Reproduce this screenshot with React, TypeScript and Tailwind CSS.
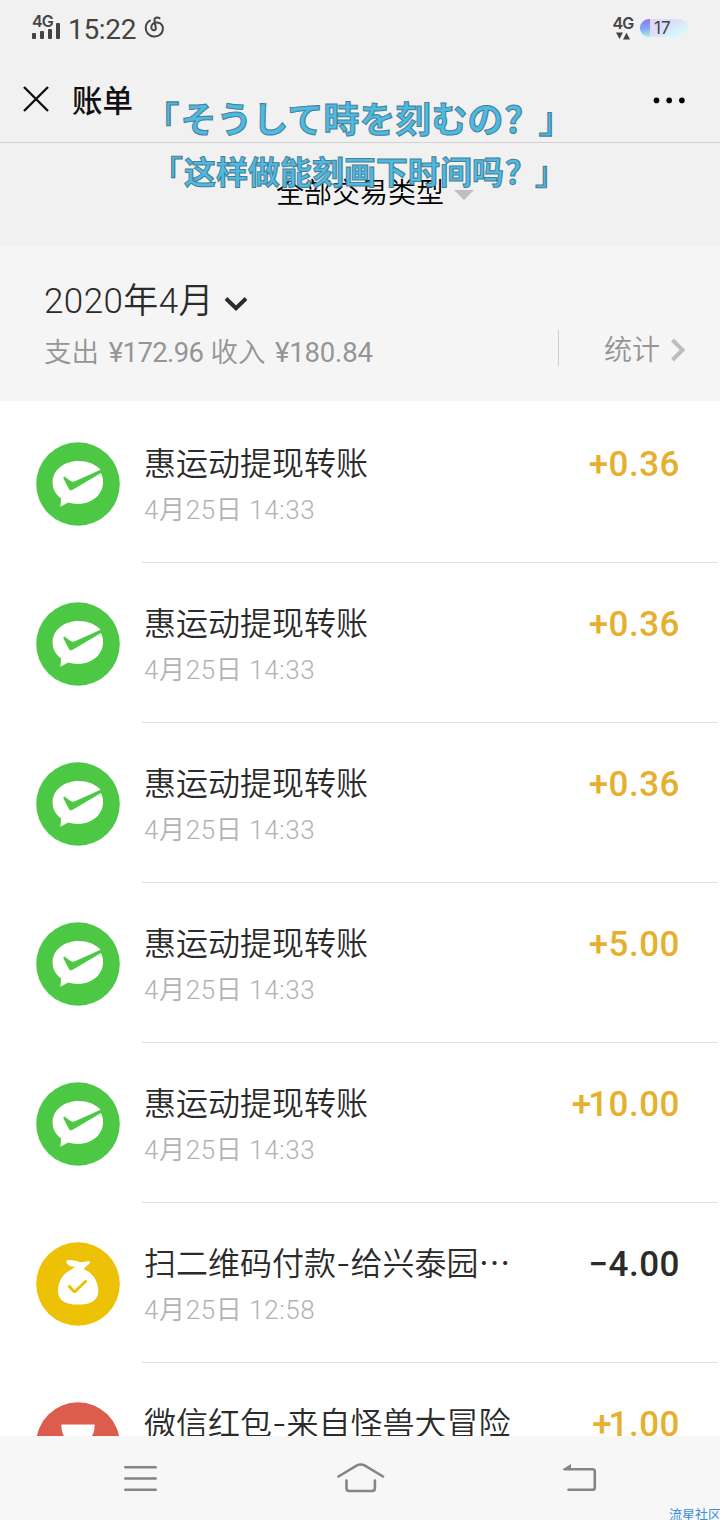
import React from "react";

type Kind = "green" | "yellow" | "red";
interface Item {
  kind: Kind;
  title: string;
  more?: boolean;
  date: [string, string, string];
  amount: string;
}

const items: Item[] = [
  { kind: "green", title: "惠运动提现转账", date: ["4", "25", "14:33"], amount: "+0.36" },
  { kind: "green", title: "惠运动提现转账", date: ["4", "25", "14:33"], amount: "+0.36" },
  { kind: "green", title: "惠运动提现转账", date: ["4", "25", "14:33"], amount: "+0.36" },
  { kind: "green", title: "惠运动提现转账", date: ["4", "25", "14:33"], amount: "+5.00" },
  { kind: "green", title: "惠运动提现转账", date: ["4", "25", "14:33"], amount: "+10.00" },
  { kind: "yellow", title: "扫二维码付款-给兴泰园", more: true, date: ["4", "25", "12:58"], amount: "−4.00" },
  { kind: "red", title: "微信红包-来自怪兽大冒险", date: ["", "", ""], amount: "+1.00" },
];

function Badge({ kind }: { kind: Kind }) {
  return (
    <svg width="84" height="84" viewBox="0 0 84 84" className="shrink-0">
      {kind === "green" && (
        <>
          <circle cx="42" cy="42" r="41.8" fill="#4dc844" />
          <path
            d="M64.5 27.8C60 22.400 51.800 19 42 19C28 19 16.600 28.200 16.600 40.500C16.600 47.300 19.800 52.600 25.200 56.400L24.300 64.800L32.200 60.600C35 61.500 38.500 61.900 42 61.900C56 61.900 67 52.400 67 40.500C67 37 66.600 34.200 65 31.100L37.500 47.300C35.500 48.400 34 48.600 33 46.900L27.500 36.500C27.200 34.900 28.300 34.500 29.500 35.200L34.600 39C36 39.900 37.500 39.900 39 39.200Z"
            fill="#fff"
          />
        </>
      )}
      {kind === "yellow" && (
        <>
          <circle cx="42" cy="42" r="41.8" fill="#ecc106" />
          <path
            d="M30 19.500C32 17 36 18.600 39 18.800C42 18.800 43.500 20.600 46 20.200C49 19.600 53 18.600 54 19.600C54.700 21 51 23.500 47.500 27.200C56.500 30 62.300 39 62.300 49C62.300 59 54 62.600 42.200 62.600C30 62.600 22 59 22 49C22 39 27.500 31.200 35.500 27.500L39.500 24.300C35 25.500 31 23.500 30 19.500Z"
            fill="#fff"
          />
          <path d="M32.500 43.600L38.500 50L50.500 38.500" fill="none" stroke="#ecc106" strokeWidth="3" strokeLinejoin="bevel" />
        </>
      )}
      {kind === "red" && (
        <>
          <circle cx="42" cy="42" r="41.8" fill="#dc5d4b" />
          <path d="M25.500 22.500H58.500C59 30 56.500 34.500 53 37H31C27.500 34.500 25 30 25.500 22.500Z" fill="#fff" />
        </>
      )}
    </svg>
  );
}

function Row({ item }: { item: Item }) {
  return (
    <div className="flex h-[160px] shrink-0 pl-9">
      <div className="pt-[39px]">
        <Badge kind={item.kind} />
      </div>
      <div className="ml-[22px] mr-0.5 flex flex-1 justify-between border-b border-[#e3e3e3] pl-0.5 pr-[38px] pt-[37px]">
        <div>
          <div className="h-12 whitespace-nowrap font-['Inter','Noto_Sans_CJK_SC',sans-serif] text-[32px] font-[350] leading-[48px] text-[#2b2b2b]">
            {item.title}
            {item.more && (
              <span lang="zh-CN" className="font-['Noto_Sans_CJK_SC',sans-serif] leading-none">
                …
              </span>
            )}
          </div>
          {item.date[0] !== "" && (
            <div className="mt-[2px] whitespace-nowrap font-['Roboto','Noto_Sans_CJK_SC',sans-serif] text-[26px] font-[350] leading-[40px] tracking-[0.6px] text-[#b2b2b2]">
              {item.date[0]}月{item.date[1]}日 {item.date[2]}
            </div>
          )}
        </div>
        <div
          className={
            "whitespace-nowrap font-['Roboto',sans-serif] text-[35px] font-medium leading-[50px] tracking-[0.5px] " +
            (item.amount.startsWith("+") ? "text-[#e6b02f]" : "text-[#2b2b2b]")
          }
        >
          <span className={item.amount[1] === "1" ? "tracking-[-3px]" : ""}>{item.amount[0]}</span>
          {item.amount.slice(1)}
        </div>
      </div>
    </div>
  );
}

function StatusBar() {
  return (
    <div className="flex h-[56px] shrink-0 items-start pl-8 pr-8">
      <div className="flex w-[29px] flex-col pt-[14px]">
        <span className="font-['Inter',sans-serif] text-[16px] font-semibold leading-[14px] tracking-[-0.8px] text-[#444]">4G</span>
        <svg width="29" height="17" viewBox="0 0 29 17" className="-mt-[5px]">
          <g fill="#444">
            <rect x="0" y="10" width="4" height="6" rx="1" />
            <rect x="8" y="8" width="4" height="8" rx="1" />
            <rect x="16" y="6" width="4" height="10" rx="1" />
            <rect x="24" y="0" width="4" height="16" rx="1" />
          </g>
        </svg>
      </div>
      <span className="ml-[7px] mt-[13px] w-[69px] whitespace-nowrap font-['Roboto',sans-serif] text-[28px] leading-[34px] tracking-[-0.3px] text-[#444]">
        15:22
      </span>
      <svg width="22" height="24" viewBox="0 0 22 24" className="ml-[7px] mt-4" fill="none" stroke="#444" strokeWidth="2" strokeLinecap="round">
        <path d="M15.500 2.200C13 .8 10.200 1.800 10.400 4.300L11.800 12C12.200 14.500 8.400 15.300 7.500 12.500C6.500 9 9.500 6.200 13 6.500C17.500 6.800 19.500 10 18.800 14C18 18.500 14 20.800 9.800 20.400C5 20 1.600 16.500 1.700 11.800C1.800 8.500 3.600 5.800 6 4.600" />
      </svg>
      <div className="ml-auto flex w-[20px] flex-col items-center pt-[16px]">
        <span className="font-['Inter',sans-serif] text-[16px] font-semibold leading-[15px] tracking-[-0.8px] text-[#444]">4G</span>
        <svg width="14" height="8" viewBox="0 0 14 8" fill="#444" className="mt-[1px]">
          <path d="M0 .5H7L3.500 7ZM7 7.500H14L10.500 .8Z" />
        </svg>
      </div>
      <div className="ml-[7px] mt-[19px] flex h-[18px] w-[48px] items-center overflow-hidden rounded-full bg-[linear-gradient(150deg,#dfd5fa_0%,#dcdcfa_45%,#d8f3fb_75%,#effae4_100%)]">
        <div className="h-full w-[10px] bg-[linear-gradient(170deg,#8f7cf0_10%,#80a4f4_50%,#a4efe0_95%)]" />
        <span className="ml-1 font-['Inter',sans-serif] text-[17px] leading-[18px] text-[#444]">17</span>
      </div>
    </div>
  );
}

export default function App() {
  return (
    <div className="relative flex h-[1520px] w-[720px] flex-col overflow-hidden bg-white font-['Noto_Sans_CJK_SC',sans-serif]">
      <header className="flex h-[143px] shrink-0 flex-col border-b border-[#d2d2d2] bg-[#f1f1f1]">
        <StatusBar />
        <div className="flex flex-1 items-start pl-[23px] pr-[34px]">
          <svg width="26" height="26" viewBox="0 0 26 26" className="mt-[30px]" stroke="#111" strokeWidth="2.400">
            <path d="M1 1L25 25M25 1L1 25" />
          </svg>
          <h1 className="ml-[23px] mt-[20px] text-[30.500px] font-medium leading-[46px] text-[#111]">账单</h1>
          <svg width="33" height="8" viewBox="0 0 33 8" className="ml-auto mt-[40px]">
            <circle cx="3.500" cy="4.400" r="2.800" />
            <circle cx="16.200" cy="4.400" r="2.800" />
            <circle cx="28.900" cy="4.400" r="2.800" />
          </svg>
        </div>
      </header>

      <div className="flex h-[103px] shrink-0 items-start bg-[#f1f1f1] pl-[276px]">
        <span className="mt-[27px] text-[28px] font-[350] leading-[42px] text-black">全部交易类型</span>
        <svg width="20" height="10" viewBox="0 0 20 10" className="ml-[10px] mt-[47px]">
          <path d="M0 0H20L10 10Z" fill="#bfbfbf" />
        </svg>
      </div>

      <section className="flex h-[155px] shrink-0 bg-[#f5f5f5] pl-[44px]">
        <div className="w-[514px] pt-[31px]">
          <div className="flex items-center font-['Roboto','Noto_Sans_CJK_SC',sans-serif] text-[35px] font-[350] leading-[50px] tracking-[0.4px] text-[#2b2b2b]">
            <span className="whitespace-nowrap">2020年4月</span>
            <svg width="24" height="16" viewBox="0 0 24 16" className="ml-[10px] mt-[4px]" fill="none" stroke="#2b2b2b" strokeWidth="4">
              <path d="M2 2.500L12 12.200L22 2.500" />
            </svg>
          </div>
          <div className="mt-[5px] whitespace-nowrap font-['Roboto','Noto_Sans_CJK_SC',sans-serif] text-[27.500px] font-[350] leading-[42px] text-[#959595]">
            支出 <span className="ml-[3px] inline-block w-[95px] font-normal tracking-[-0.6px]">¥172.96</span>{" "}
            收入 <span className="ml-[3px] font-normal tracking-[-0.2px]">¥180.84</span>
          </div>
        </div>
        <div className="mt-[84px] h-[36px] w-px bg-[#cfcfcf]" />
        <span className="ml-[45px] mt-[81px] text-[28px] font-[350] leading-[42px] text-[#959595]">统计</span>
        <svg width="16" height="24" viewBox="0 0 16 24" className="ml-[10px] mt-[92px]" fill="none" stroke="#bdbdbd" strokeWidth="4">
          <path d="M2.500 2L12.500 12L2.500 22" />
        </svg>
      </section>

      <main className="flex min-h-0 flex-1 flex-col overflow-hidden bg-white pt-0.5">
        {items.map((item, i) => (
          <Row key={i} item={item} />
        ))}
      </main>

      <nav className="flex h-[84px] shrink-0 bg-[#f7f7f7] pl-[124px] pt-[27px]">
        <svg width="34" height="32" viewBox="0 0 34 32" fill="none" stroke="#858585" strokeWidth="2.600" strokeLinecap="round">
          <path d="M1.300 4.300H31.700M1.300 15.500H31.700M1.300 26.700H31.700" />
        </svg>
        <svg width="48" height="32" viewBox="0 0 48 32" className="ml-[179px]" fill="none" stroke="#858585" strokeWidth="2.600" strokeLinecap="round" strokeLinejoin="round">
          <path d="M1.500 13.500L19.500 2.600Q23.700 .5 28 2.600L46 13.500" />
          <path d="M9.500 17.500V25.300Q9.500 28 12.200 28H35.200Q37.900 28 37.900 25.300V17.500" />
        </svg>
        <svg width="36" height="32" viewBox="0 0 36 32" className="ml-[177px]" fill="none" stroke="#858585" strokeWidth="2.600" strokeLinecap="round">
          <path d="M3 6.200H30.500Q32.800 6.200 32.800 8.500V24.400Q32.800 26.800 30.500 26.800H6.500" />
          <path d="M0 6.800L9 1V7.300Z" fill="#858585" stroke="none" />
        </svg>
      </nav>

      <div className="pointer-events-none absolute inset-x-0 top-[91px] flex flex-col items-center whitespace-nowrap font-bold text-[#4cbbe4] [-webkit-text-stroke:1px_#4a7d94]">
        <div className="text-[36px] leading-[52px]">
          <span className="relative -left-px font-medium [-webkit-text-stroke-width:1.2px]">「</span>
          <span lang="ja" className="font-['Noto_Sans_CJK_JP',sans-serif]">
            そうして時を刻むの
          </span>
          <span className="relative left-px">？</span>
          <span className="relative -left-px font-medium [-webkit-text-stroke-width:1.2px]">」</span>
        </div>
        <div className="mt-[3px] text-[32px] leading-[48px]">
          <span className="relative -left-px font-medium [-webkit-text-stroke-width:1.2px]">「</span>
          这样做能刻画下时间吗
          <span className="relative left-px">？</span>
          <span className="relative -left-px font-medium [-webkit-text-stroke-width:1.2px]">」</span>
        </div>
      </div>

      <div className="absolute left-[669px] top-[1505px] whitespace-nowrap text-[13px] leading-[18px] text-[#3b8ee0]">流星社区</div>
    </div>
  );
}
